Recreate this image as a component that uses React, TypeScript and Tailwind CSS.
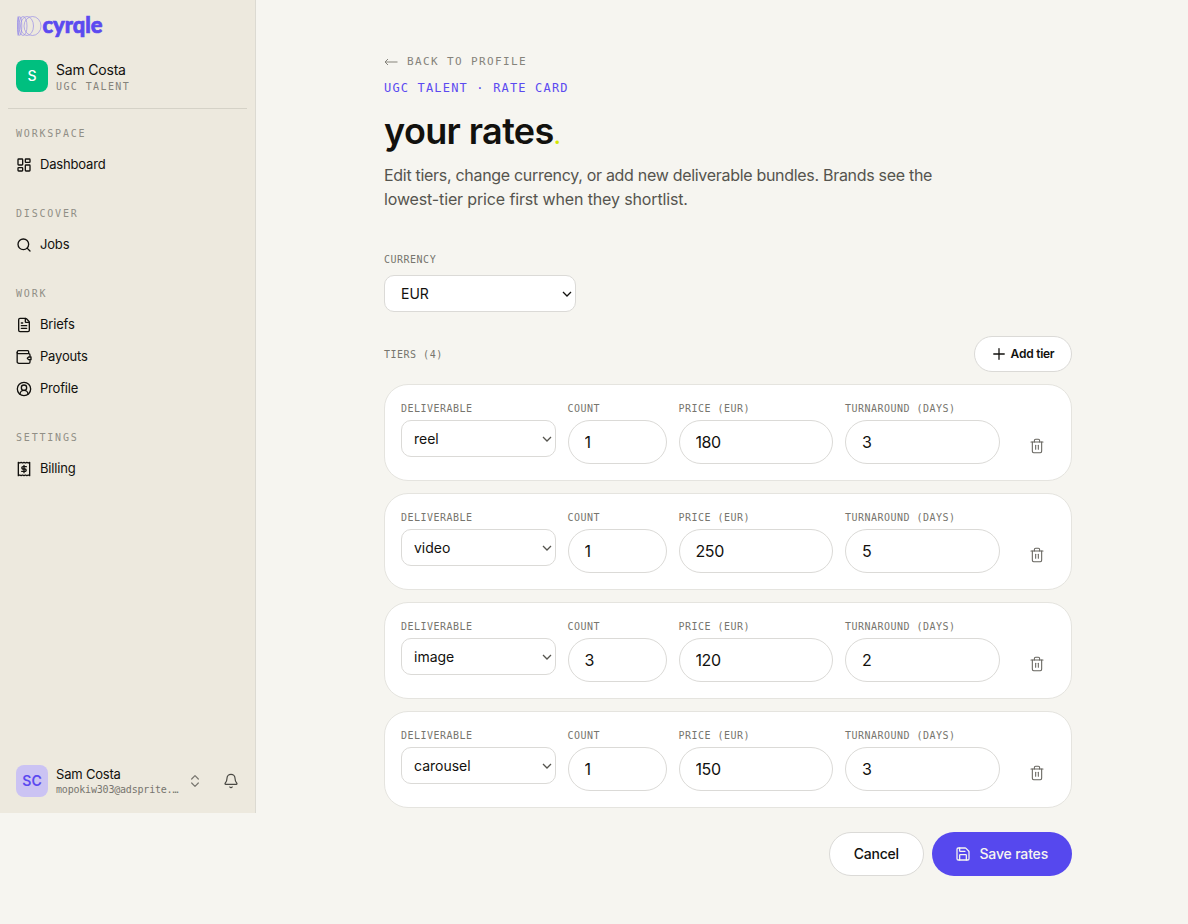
import { useState } from "react";
import {
  Bell,
  ChevronsUpDown,
  CircleUserRound,
  FileText,
  LayoutDashboard,
  Plus,
  Save,
  Search,
  Trash2,
} from "lucide-react";

interface Tier {
  deliverable: string;
  count: number;
  price: number;
  days: number;
}

interface NavItem {
  label: string;
  icon: React.ReactNode;
}

interface NavGroup {
  title: string;
  items: NavItem[];
}

const MONO = "font-['DejaVu_Sans_Mono',monospace]";

const NAV: NavGroup[] = [
  {
    title: "Workspace",
    items: [{ label: "Dashboard", icon: <LayoutDashboard size={16} /> }],
  },
  { title: "Discover", items: [{ label: "Jobs", icon: <Search size={16} /> }] },
  {
    title: "Work",
    items: [
      { label: "Briefs", icon: <FileText size={16} /> },
      { label: "Payouts", icon: <WalletIcon /> },
      { label: "Profile", icon: <CircleUserRound size={16} /> },
    ],
  },
  { title: "Settings", items: [{ label: "Billing", icon: <BillIcon /> }] },
];

const CURRENCIES = ["EUR", "USD", "GBP"];
const DELIVERABLES = ["reel", "video", "image", "carousel"];

const INITIAL_TIERS: Tier[] = [
  { deliverable: "reel", count: 1, price: 180, days: 3 },
  { deliverable: "video", count: 1, price: 250, days: 5 },
  { deliverable: "image", count: 3, price: 120, days: 2 },
  { deliverable: "carousel", count: 1, price: 150, days: 3 },
];

function WalletIcon() {
  return (
    <svg width="16" height="16" viewBox="0 0 24 24" fill="none" stroke="currentColor" strokeWidth="2" strokeLinecap="round" strokeLinejoin="round">
      <path d="M19 6.500V4a1.500 1.500 0 0 0-1.500-1.500H4A2.250 2.250 0 0 0 4 7h15a2 2 0 0 1 2 2v2" />
      <path d="M1.750 5v14a2.500 2.500 0 0 0 2.500 2.500H19a2 2 0 0 0 2-2V17" />
      <path d="M22.500 12h-3.500l-2 2 2 2h3.500z" />
    </svg>
  );
}

function BillIcon() {
  return (
    <svg width="16" height="16" viewBox="0 0 24 24" fill="none" stroke="currentColor" strokeWidth="2" strokeLinecap="round" strokeLinejoin="round">
      <path d="M3.500 2v20l2.125-1 2.125 1 2.125-1L12 22l2.125-1 2.125 1 2.125-1 2.125 1V2l-2.125 1-2.125-1-2.125 1L12 2 9.875 3 7.750 2 5.625 3Z" />
      <path d="M15.500 8.500h-5a1.750 1.750 0 0 0 0 3.500h3a1.750 1.750 0 0 1 0 3.500h-5M12 6.500v11" />
    </svg>
  );
}

function Logo() {
  return (
    <svg width="90" height="32" viewBox="0 0 90 32" fill="none" className="block">
      <g stroke="#5b4af0" strokeWidth="0.6" opacity="0.65">
        <ellipse cx="2.200" cy="16" rx="0.800" ry="9.500" />
        <ellipse cx="3.800" cy="16" rx="2" ry="9.500" />
        <ellipse cx="7" cy="16" rx="4" ry="9.500" />
        <ellipse cx="11" cy="16" rx="6.500" ry="9.500" />
        <ellipse cx="16.500" cy="16" rx="8.500" ry="9.500" />
      </g>
      <text
        x="26.500"
        y="22.500"
        textLength="60"
        lengthAdjust="spacingAndGlyphs"
        fill="#5b4af0"
        stroke="#5b4af0"
        strokeWidth="0.7"
        className="font-['Lato',sans-serif] text-[22px] font-black"
      >
        cyrqle
      </text>
    </svg>
  );
}

function Sidebar() {
  return (
    <aside className="flex h-[813px] w-64 shrink-0 flex-col border-r border-[#dcdad2] bg-[#ede9de]">
      <div className="px-4 pt-2.5">
        <Logo />
      </div>

      <div className="mx-2 mt-2.5 flex h-[57px] items-start gap-2 border-b border-[#d5d2c7] px-2 pt-2">
        <div className="flex size-8 items-center justify-center rounded-lg bg-[#00bf7f] text-sm font-medium text-white">
          S
        </div>
        <div>
          <div className="pb-px text-[14px] leading-5 tracking-[-0.200px]">Sam Costa</div>
          <div className={`${MONO} text-[10px] leading-3 tracking-[1.400px] text-[#85837b]`}>
            UGC TALENT
          </div>
        </div>
      </div>

      <nav className="flex flex-1 flex-col gap-4 pt-2">
        {NAV.map((group) => (
          <div key={group.title} className="px-2">
            <div className={`${MONO} flex h-8 items-center px-2 text-[10px] tracking-[1.800px] text-[#918f86] uppercase`}>
              {group.title}
            </div>
            {group.items.map((item) => (
              <a key={item.label} className="flex h-8 items-center gap-2 px-2 text-[13px] tracking-[-0.180px]">
                {item.icon}
                <span>{item.label}</span>
              </a>
            ))}
          </div>
        ))}
      </nav>

      <div className="flex items-center px-4 pb-4">
        <div className="flex size-8 items-center justify-center rounded-lg bg-[#cbc3f3] text-sm font-semibold text-[#5b4af0]">
          SC
        </div>
        <div className="ml-2 w-[124px]">
          <div className="text-[13px] leading-[17px] tracking-[-0.200px]">Sam Costa</div>
          <div className={`${MONO} text-[10px] leading-[14px] tracking-[-0.200px] text-[#77756e]`}>
            mopokiw303@adsprite.…
          </div>
        </div>
        <ChevronsUpDown size={16} strokeWidth={1.8} className="ml-[7px] text-[#77756e]" />
        <Bell size={16} strokeWidth={1.8} className="ml-5 text-[#4a4944]" />
      </div>
    </aside>
  );
}

interface SelectProps {
  value: string;
  options: string[];
  onChange?: (value: string) => void;
  className: string;
  arrowClassName: string;
}

function Select({ value, options, onChange, className, arrowClassName }: SelectProps) {
  return (
    <div className={`relative ${arrowClassName}`}>
      <select
        defaultValue={value}
        onChange={(e) => onChange?.(e.target.value)}
        className={`block h-[37px] w-full appearance-none rounded-[10px] border border-[#dbdad7] bg-white text-sm text-[#12110e] ${className}`}
      >
        {options.map((option) => (
          <option key={option}>{option}</option>
        ))}
      </select>
      <svg
        width="10"
        height="6"
        viewBox="0 0 10 6"
        fill="none"
        stroke="currentColor"
        strokeWidth="1.3"
        className="pointer-events-none absolute top-4 right-1"
      >
        <path d="M1 1l4 4 4-4" />
      </svg>
    </div>
  );
}

interface FieldProps {
  label: string;
  className?: string;
  children: React.ReactNode;
}

function Field({ label, className, children }: FieldProps) {
  return (
    <div className={className}>
      <label className={`${MONO} mb-1 block text-[10px] leading-[15px] tracking-[0.480px] text-[#77756e] uppercase`}>
        {label}
      </label>
      {children}
    </div>
  );
}

function NumberInput({ value }: { value: number }) {
  return (
    <input
      defaultValue={value}
      className="block h-11 w-full rounded-full border border-[#dbdad7] bg-white px-4 text-base tracking-[-0.400px]"
    />
  );
}

interface TierRowProps {
  tier: Tier;
  currency: string;
  onRemove: () => void;
}

function TierRow({ tier, currency, onRemove }: TierRowProps) {
  return (
    <div className="grid grid-cols-12 gap-3 rounded-3xl border border-[#e5e4df] bg-white p-4">
      <Field label="Deliverable" className="col-span-3">
        <Select
          value={tier.deliverable}
          options={DELIVERABLES}
          className="px-3"
          arrowClassName="text-[#55544e]"
        />
      </Field>
      <Field label="Count" className="col-span-2">
        <NumberInput value={tier.count} />
      </Field>
      <Field label={`Price (${currency})`} className="col-span-3">
        <NumberInput value={tier.price} />
      </Field>
      <Field label="Turnaround (days)" className="col-span-3">
        <NumberInput value={tier.days} />
      </Field>
      <div className="flex items-end justify-end">
        <button
          type="button"
          onClick={onRemove}
          aria-label="Remove tier"
          className="flex size-9 items-center justify-center text-[#66645e]"
        >
          <Trash2 size={16} strokeWidth={1.6} />
        </button>
      </div>
    </div>
  );
}

export default function App() {
  const [currency, setCurrency] = useState("EUR");
  const [tiers, setTiers] = useState(INITIAL_TIERS);

  const addTier = () =>
    setTiers([...tiers, { deliverable: "reel", count: 1, price: 100, days: 3 }]);

  return (
    <div className="flex min-h-[924px] items-start bg-[#f6f5f0] font-['Inter',sans-serif] text-[#12110e]">
      <Sidebar />

      <main className="ml-32 w-[688px] pt-[54px]">
        <a className={`${MONO} flex h-[17px] items-center text-[11px] tracking-[1.370px] text-[#85837b]`}>
          <svg width="14" height="9" viewBox="0 0 14 9" fill="none" stroke="currentColor" className="mr-[9px]">
            <path d="M13.500 4H1M4 1L1 4l3 3" />
          </svg>
          BACK TO PROFILE
        </a>
        <div className={`${MONO} mt-2 text-[12px] leading-[18px] tracking-[1.170px] text-[#5b4af0]`}>
          UGC TALENT · RATE CARD
        </div>
        <h1 className="mt-3 text-[36px] leading-[45px] font-semibold tracking-[-0.620px]">
          your rates<span className="text-[22px] leading-none text-[#d4e600]">.</span>
        </h1>
        <p className="mt-[9px] text-base tracking-[-0.300px] text-[#55544e]">
          Edit tiers, change currency, or add new deliverable bundles. Brands see the
          <br />
          <span className="tracking-[-0.140px]">lowest-tier price first when they shortlist.</span>
        </p>

        {/* Currency */}
        <div className="mt-[41px]">
          <div className={`${MONO} mb-2 text-[10px] leading-[15px] tracking-[0.500px] text-[#77756e]`}>
            CURRENCY
          </div>
          <Select
            value={currency}
            options={CURRENCIES}
            onChange={setCurrency}
            className="px-4"
            arrowClassName="w-48 text-[#12110e]"
          />
        </div>

        {/* Tiers */}
        <div className="mt-6 flex items-center justify-between">
          <div className={`${MONO} text-[10px] leading-[15px] tracking-[0.500px] text-[#77756e]`}>
            TIERS ({tiers.length})
          </div>
          <button
            type="button"
            onClick={addTier}
            className="flex h-9 w-[98px] items-center justify-center gap-[3px] rounded-full border border-[#dbdad7] bg-white pr-0.5 text-xs font-semibold tracking-[-0.250px]"
          >
            <Plus size={18} strokeWidth={1.7} />
            Add tier
          </button>
        </div>
        <div className="mt-3 flex flex-col gap-3">
          {tiers.map((tier, i) => (
            <TierRow
              key={i}
              tier={tier}
              currency={currency}
              onRemove={() => setTiers(tiers.filter((_, j) => j !== i))}
            />
          ))}
        </div>

        {/* Actions */}
        <div className="mt-6 flex justify-end gap-2">
          <button
            type="button"
            className="h-11 w-[94.5px] rounded-full border border-[#dbdad7] bg-white text-sm font-medium tracking-[-0.280px]"
          >
            Cancel
          </button>
          <button
            type="button"
            className="flex h-11 w-[140.5px] items-center justify-center gap-2 rounded-full bg-[#5648ee] text-sm font-medium tracking-[-0.160px] text-[#f6f5f0]"
          >
            <Save size={16} strokeWidth={1.9} />
            Save rates
          </button>
        </div>
      </main>
    </div>
  );
}
